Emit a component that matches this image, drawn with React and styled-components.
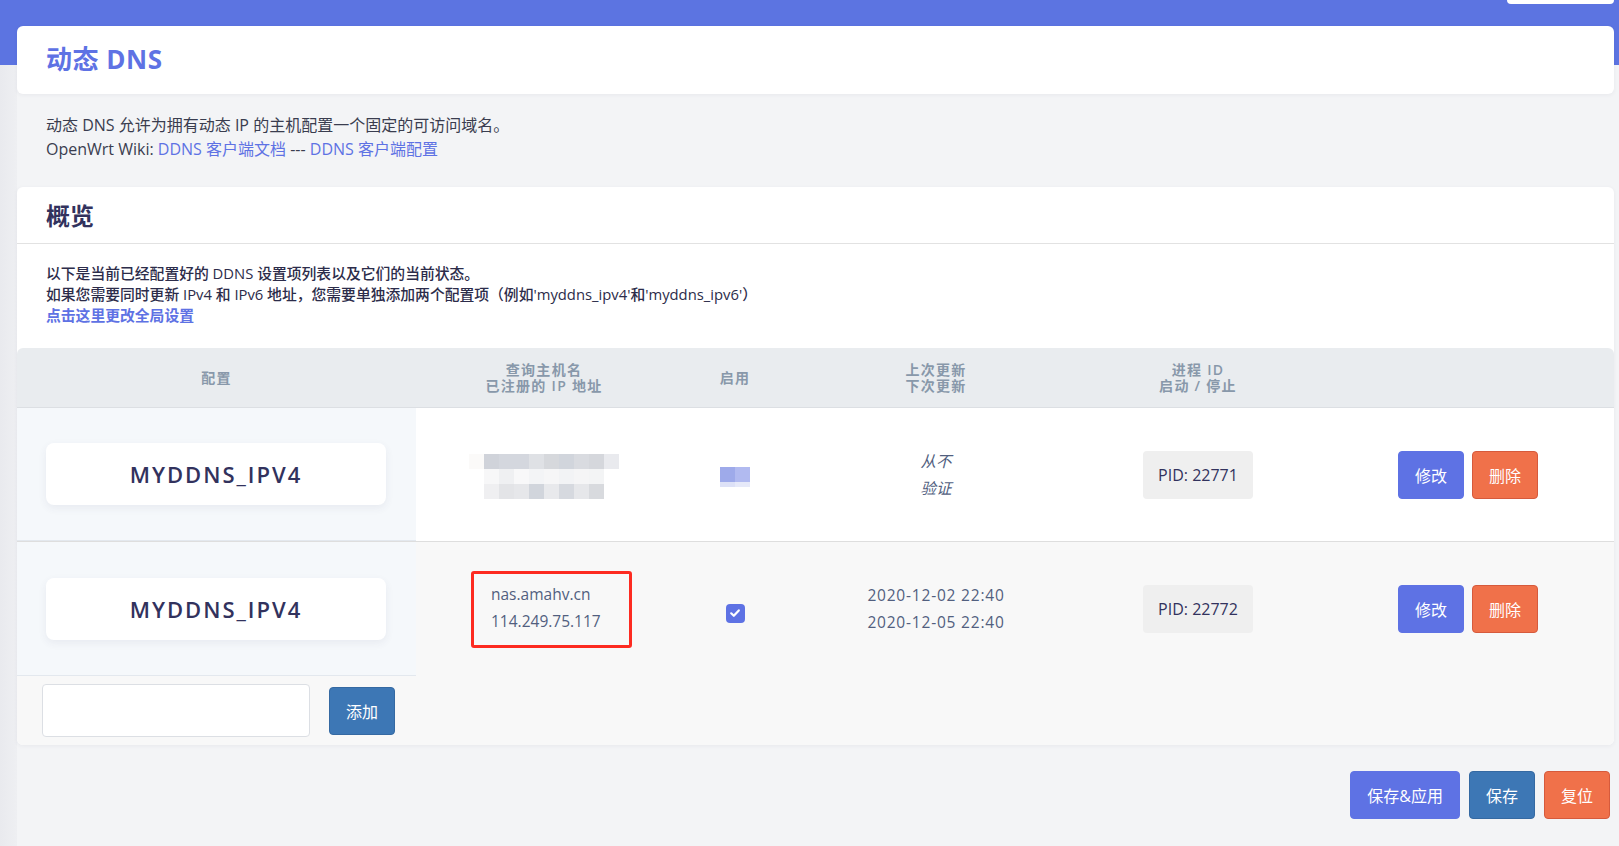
import React from "react";
import styled, { createGlobalStyle } from "styled-components";

const GlobalStyle = createGlobalStyle`
  html, body {
    margin: 0;
    padding: 0;
  }
  body {
    font-family: "Open Sans", "Noto Sans CJK SC", sans-serif;
    background: #f3f4f6;
    color: #32325d;
  }
  * {
    box-sizing: border-box;
  }
`;

const cols = "399px 256px 126px 276px 248px 1fr";

const mosaic = [
  ["#fbfaf9", "#d0d3da", "#d4d7de", "#d4d7de", "#dfe1e5", "#d6d8dc", "#d1d5dc", "#d9dbe0", "#d5d7dc", "#e9eaee"],
  ["transparent", "#f7f7f8", "#eff0f2", "#f8f8f9", "#f3f4f6", "#f6f6f7", "#f2f3f5", "#f5f5f6", "#f3f4f5", "transparent"],
  ["transparent", "#efeff1", "#e3e4e7", "#e6e7ea", "#d1d5dc", "#e8e9ec", "#d6d9df", "#e6e7ea", "#d8dade", "transparent"],
];

const checkMosaic = [
  ["#9eaaea", "#b1baf0"],
  ["#dde1f7", "#e6e9f9"],
];

const App = () => {
  return (
    <Page>
      <GlobalStyle />
      <TopBar>
        <TopTab />
      </TopBar>

      <TitleCard>
        <PageTitle>动态 DNS</PageTitle>
      </TitleCard>

      <Intro>
        <div>动态 DNS 允许为拥有动态 IP 的主机配置一个固定的可访问域名。</div>
        <div>
          OpenWrt Wiki: <a href="#">DDNS 客户端文档</a> --- <a href="#">DDNS 客户端配置</a>
        </div>
      </Intro>

      <Card>
        <CardHead>概览</CardHead>
        <CardText>
          <div>以下是当前已经配置好的 DDNS 设置项列表以及它们的当前状态。</div>
          <div>
            如果您需要同时更新 IPv4 和 IPv6 地址，您需要单独添加两个配置项（例如'myddns_ipv4'和'myddns_ipv6'）
          </div>
          <StrongLink href="#">点击这里更改全局设置</StrongLink>
        </CardText>

        <HeadRow>
          <HeadCell>配置</HeadCell>
          <HeadCell>
            查询主机名
            <br />
            已注册的 IP 地址
          </HeadCell>
          <HeadCell>启用</HeadCell>
          <HeadCell>
            上次更新
            <br />
            下次更新
          </HeadCell>
          <HeadCell>
            进程 ID
            <br />
            启动 / 停止
          </HeadCell>
          <HeadCell />
        </HeadRow>

        <DataRow>
          <NameCell>
            <NameCard>MYDDNS_IPV4</NameCard>
          </NameCell>
          <Cell>
            <Mosaic>
              {mosaic.map((row, r) => (
                <MosaicRow key={r}>
                  {row.map((c, i) => (
                    <Block key={i} $c={c} />
                  ))}
                </MosaicRow>
              ))}
            </Mosaic>
          </Cell>
          <Cell>
            <Mosaic>
              {checkMosaic.map((row, r) => (
                <MosaicRow key={r}>
                  {row.map((c, i) => (
                    <Block key={i} $c={c} $h={r === 0 ? 15 : 5} />
                  ))}
                </MosaicRow>
              ))}
            </Mosaic>
          </Cell>
          <Cell>
            <Lines $italic>
              <div>从不</div>
              <div>验证</div>
            </Lines>
          </Cell>
          <Cell>
            <Pid>PID: 22771</Pid>
          </Cell>
          <Cell>
            <Actions>
              <Btn $variant="primary">修改</Btn>
              <Btn $variant="danger">删除</Btn>
            </Actions>
          </Cell>
        </DataRow>

        <DataRow $striped $last>
          <NameCell>
            <NameCard>MYDDNS_IPV4</NameCard>
          </NameCell>
          <Cell>
            <Marked>
              <Lines $left>
                <div>nas.amahv.cn</div>
                <div>114.249.75.117</div>
              </Lines>
            </Marked>
          </Cell>
          <Cell>
            <Check>
              <svg width="12" height="12" viewBox="0 0 12 12">
                <path d="M2.2 6.3 L4.8 8.8 L9.8 3.4" fill="none" stroke="#fff" strokeWidth="2.2" strokeLinecap="round" strokeLinejoin="round" />
              </svg>
            </Check>
          </Cell>
          <Cell>
            <Lines $wide>
              <div>2020-12-02 22:40</div>
              <div>2020-12-05 22:40</div>
            </Lines>
          </Cell>
          <Cell>
            <Pid>PID: 22772</Pid>
          </Cell>
          <Cell>
            <Actions>
              <Btn $variant="primary">修改</Btn>
              <Btn $variant="danger">删除</Btn>
            </Actions>
          </Cell>
        </DataRow>

        <AddRow>
          <NameInput />
          <Btn $variant="info">添加</Btn>
        </AddRow>
      </Card>

      <Footer>
        <Btn $variant="primary">保存&amp;应用</Btn>
        <Btn $variant="info">保存</Btn>
        <Btn $variant="danger">复位</Btn>
      </Footer>
    </Page>
  );
};

const Page = styled.div`
  min-height: 846px;
  padding: 0 5px 0 17px;
  background: linear-gradient(#5c74e1 0, #5c74e1 65px, transparent 65px),
    linear-gradient(to right, #e9eaee 0, #eeeff2 17px, #f3f4f6 17px);
`;

const TopBar = styled.div`
  height: 26px;
  display: flex;
  justify-content: flex-end;
  align-items: flex-start;
`;

const TopTab = styled.div`
  width: 107px;
  height: 4px;
  background: #fff;
  border-radius: 0 0 4px 4px;
`;

const TitleCard = styled.div`
  height: 68px;
  display: flex;
  align-items: center;
  padding: 0 0 4px 29px;
  background: #fff;
  border-radius: 6px;
  box-shadow: 0 1px 4px rgba(50, 50, 93, 0.06);
`;

const PageTitle = styled.h2`
  margin: 0;
  font-size: 26px;
  font-weight: 700;
  letter-spacing: 0.5px;
  color: #5e72e4;
`;

const Intro = styled.div`
  padding: 19px 29px 0;
  font-size: 16px;
  line-height: 24px;
  color: #3a3d4f;

  a {
    color: #5e72e4;
    text-decoration: none;
  }
`;

const Card = styled.div`
  margin-top: 26px;
  background: #fff;
  border-radius: 6px;
  overflow: hidden;
  box-shadow: 0 1px 4px rgba(50, 50, 93, 0.06);
`;

const CardHead = styled.div`
  height: 57px;
  display: flex;
  align-items: center;
  padding: 0 0 2px 29px;
  border-bottom: 1px solid #e2e2e2;
  font-size: 24px;
  font-weight: 700;
  color: #32325d;
`;

const CardText = styled.div`
  padding: 19px 29px 22px;
  font-size: 14.8px;
  line-height: 21px;
  font-weight: 500;
  color: #2c2c4a;
`;

const StrongLink = styled.a`
  color: #5e72e4;
  font-weight: 700;
  text-decoration: none;
`;

const HeadRow = styled.div`
  display: grid;
  grid-template-columns: ${cols};
  height: 60px;
  background: #e9ecef;
  border-bottom: 1px solid #dcdfe3;
  border-radius: 6px 6px 0 0;
`;

const HeadCell = styled.div`
  display: flex;
  align-items: center;
  justify-content: center;
  text-align: center;
  font-size: 14px;
  line-height: 15.5px;
  font-weight: 600;
  letter-spacing: 1.3px;
  color: #8898aa;
`;

const DataRow = styled.div`
  display: grid;
  grid-template-columns: ${cols};
  height: 134px;
  background: ${(p) => (p.$striped ? "#f8f8f8" : "#fff")};
  border-bottom: ${(p) => (p.$last ? "none" : "1px solid #dedede")};
`;

const Cell = styled.div`
  display: flex;
  align-items: center;
  justify-content: center;
`;

const NameCell = styled(Cell)`
  background: #f5f8fb;
  padding: 0 30px 0 29px;
  border-bottom: 1px solid #e3e8ee;
`;

const NameCard = styled.div`
  width: 100%;
  height: 62px;
  display: flex;
  align-items: center;
  justify-content: center;
  background: #fff;
  border-radius: 8px;
  box-shadow: 0 3px 8px rgba(50, 50, 93, 0.07);
  font-size: 22px;
  font-weight: 600;
  letter-spacing: 2px;
  color: #32325d;
`;

const Mosaic = styled.div`
  display: flex;
  flex-direction: column;
  margin-top: 4px;
`;

const MosaicRow = styled.div`
  display: flex;
`;

const Block = styled.div`
  width: 15px;
  height: ${(p) => p.$h || 15}px;
  background: ${(p) => p.$c};
`;

const Lines = styled.div`
  display: flex;
  flex-direction: column;
  align-items: ${(p) => (p.$left ? "flex-start" : "center")};
  font-size: 15.5px;
  line-height: 27px;
  letter-spacing: ${(p) => (p.$wide ? "0.8px" : "0")};
  color: #525f7f;
  font-style: ${(p) => (p.$italic ? "italic" : "normal")};
`;

const Marked = styled.div`
  width: 161px;
  height: 77px;
  margin-left: 15px;
  padding: 7px 17px 0;
  border: 3px solid #fd2b21;
  border-radius: 3px;
`;

const Check = styled.span`
  width: 19px;
  height: 19px;
  margin-top: 8px;
  display: flex;
  align-items: center;
  justify-content: center;
  background: #5e72e4;
  border-radius: 4px;
`;

const Pid = styled.div`
  height: 48px;
  padding: 0 15px;
  display: flex;
  align-items: center;
  background: #efefef;
  border-radius: 4px;
  font-size: 16px;
  color: #32325d;
`;

const Actions = styled.div`
  display: flex;
  gap: 8px;
`;

const variants = {
  primary: { bg: "#5e72e4", border: "#5e72e4" },
  danger: { bg: "#f0714a", border: "#d65a3c" },
  info: { bg: "#3d77b5", border: "#3569a2" },
};

const Btn = styled.button`
  height: 48px;
  padding: 0 16px;
  border: 1px solid ${(p) => variants[p.$variant].border};
  border-radius: 4px;
  background: ${(p) => variants[p.$variant].bg};
  color: #fff;
  font-family: inherit;
  font-size: 16px;
  cursor: pointer;
`;

const AddRow = styled.div`
  height: 69px;
  display: flex;
  align-items: center;
  gap: 19px;
  padding-left: 25px;
  background: #f8f8f8;
`;

const NameInput = styled.input`
  width: 268px;
  height: 53px;
  border: 1px solid #dcdfe4;
  border-radius: 4px;
  background: #fff;
`;

const Footer = styled.div`
  display: flex;
  justify-content: flex-end;
  gap: 9px;
  margin-top: 26px;
  padding-right: 4px;
`;

export default App;
